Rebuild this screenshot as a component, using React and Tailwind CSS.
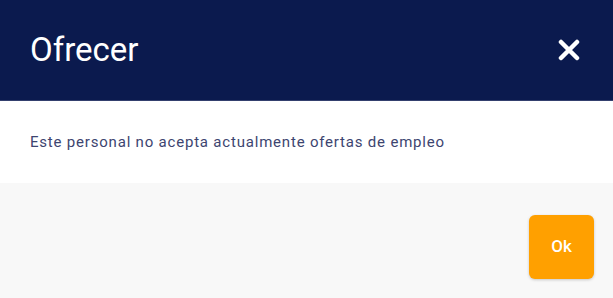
import React from "react";

export default function App() {
  return (
    <div className="w-[613px] h-[298px] flex flex-col bg-white" style={{ fontFamily: "Roboto, 'Noto Sans', sans-serif" }}>
      <div className="h-[101px] shrink-0 bg-[#0b1a4e] border-b border-[#34406e] flex items-center justify-between pl-[30px] pr-[33px]">
        <h1 className="text-[33px] leading-none text-white font-normal pb-[1px]">Ofrecer</h1>
        <svg width="22" height="22" viewBox="0 0 22 22" className="text-white">
          <path d="M3 3 L19 19 M19 3 L3 19" stroke="currentColor" strokeWidth="4.5" strokeLinecap="round" />
        </svg>
      </div>
      <div className="h-[82px] shrink-0 flex items-center px-[30px]">
        <p className="text-[15px] text-[#3d4570] tracking-[0.8px] pt-[1px]">Este personal no acepta actualmente ofertas de empleo</p>
      </div>
      <div className="flex-1 bg-[#f8f8f8] flex items-start justify-end pt-[32px] pr-[19px]">
        <button className="w-[65px] h-[64px] rounded-[6px] bg-[#ffa000] text-white text-[17px] font-medium shadow-[0_1px_3px_rgba(0,0,0,0.2)]">Ok</button>
      </div>
    </div>
  );
}
